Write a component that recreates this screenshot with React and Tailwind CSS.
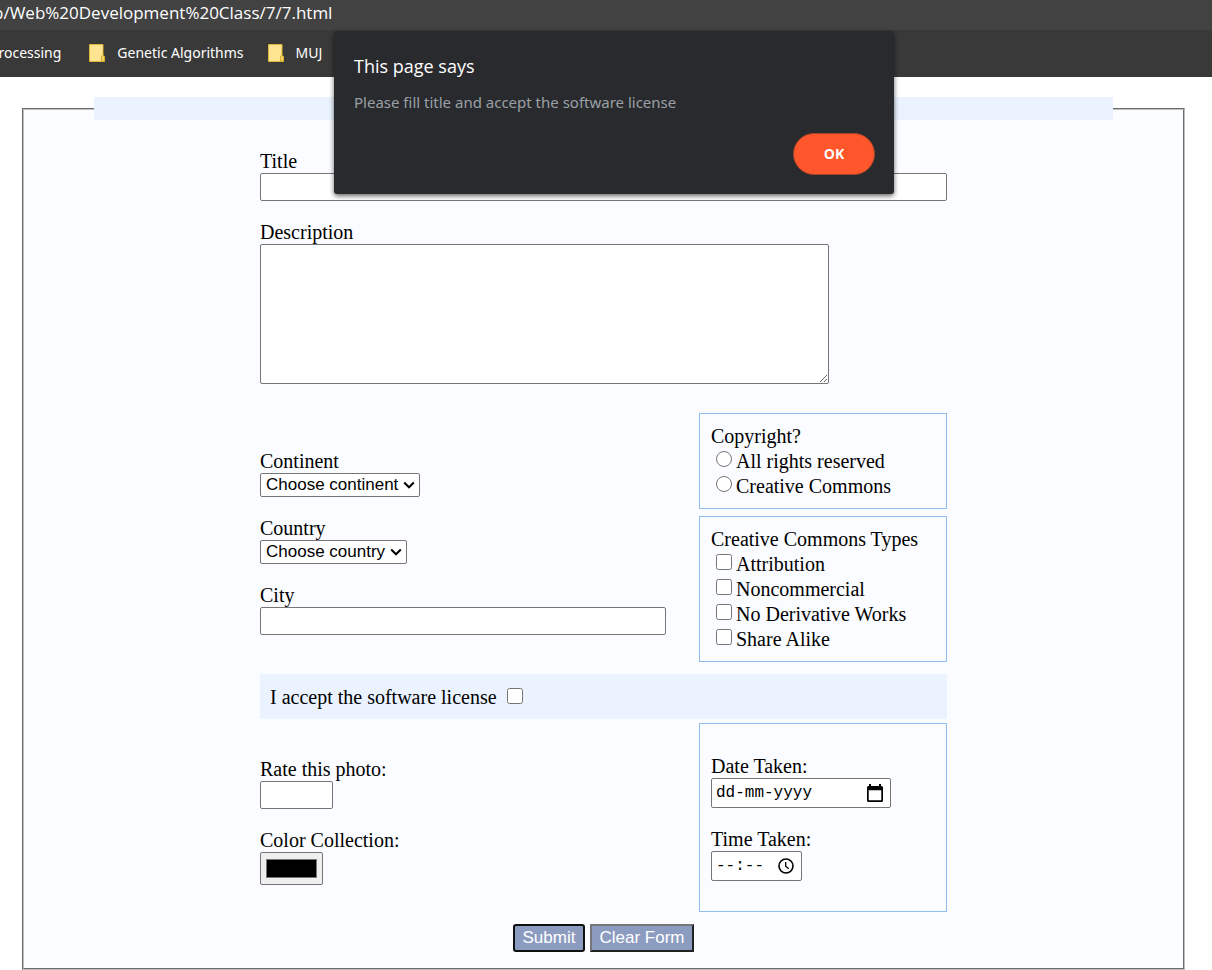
import React from "react";

const field = "block rounded-[2px] border border-[#767676] bg-white";
const panel = "border border-[#90bdeb] px-[11px] pt-[11px] pb-[10px]";
const sans = "font-['Liberation_Sans',Arial,sans-serif]";

function Folder() {
  return (
    <svg width="16" height="18" viewBox="0 0 16 18" aria-hidden="true">
      <path d="M0.5 0.5H14V12L15.5 12.5V17.5H0.5Z" fill="#ffe591" stroke="#dfb637" />
      <path d="M12.5 17V12.5L14 11.5L15.5 12.5V17Z" fill="#f6d469" stroke="#d9ae2b" />
    </svg>
  );
}

function Bookmark({ children }) {
  return (
    <a href="#" className="flex items-center gap-3 whitespace-nowrap">
      <Folder />
      {children}
    </a>
  );
}

function BrowserBar() {
  return (
    <header className="overflow-hidden text-white">
      <div className="flex h-[30px] items-start bg-[#424242] font-['Open_Sans','Noto_Sans',sans-serif]">
        <span className="-ml-[7px] text-[17px] leading-[26px] whitespace-nowrap">p/Web%20Development%20Class/7/7.html</span>
      </div>
      <nav className="flex h-[47px] items-center gap-6 bg-[#393939] pb-[2px] font-['Noto_Sans','Open_Sans',sans-serif] text-[14px] leading-5">
        <a href="#" className="-ml-[10px] mr-1">Processing</a>
        <Bookmark>Genetic Algorithms</Bookmark>
        <Bookmark>MUJ</Bookmark>
      </nav>
    </header>
  );
}

function AlertDialog() {
  return (
    <div
      role="alertdialog"
      aria-labelledby="alert-title"
      aria-describedby="alert-text"
      className="absolute top-[31px] left-[334px] flex w-[560px] flex-col rounded-[3px] bg-[#292a2d] pt-[22px] pr-[19px] pb-[19px] pl-5 font-['Open_Sans','Noto_Sans',sans-serif] shadow-[0_2px_5px_rgba(0,0,0,0.6)]"
    >
      <h2 id="alert-title" className="text-[18px] leading-[26px] text-white">This page says</h2>
      <p id="alert-text" className="mt-3 font-['Noto_Sans','Open_Sans',sans-serif] text-[15px] leading-[22px] text-[#9aa0a6]">
        Please fill title and accept the software license
      </p>
      <button
        type="button"
        className="mt-5 h-[42px] w-[82px] self-end rounded-full border border-[#a5432a] bg-[#ff562b] pb-[2px] text-[14px] font-bold text-white"
      >
        OK
      </button>
    </div>
  );
}

function Select({ id, width, children }) {
  return (
    <div className={`relative ${width}`}>
      <select id={id} className={`${field} ${sans} h-6 w-full appearance-none px-[5px] text-[17px] leading-5`}>
        <option>{children}</option>
      </select>
      <svg
        className="pointer-events-none absolute top-[8px] right-[5px]"
        width="12"
        height="8"
        viewBox="0 0 12 8"
        fill="none"
        stroke="#000"
        strokeWidth="2"
        aria-hidden="true"
      >
        <path d="M1.2 1.5L6 6.300L10.8 1.5" />
      </svg>
    </div>
  );
}

function Option({ type, name, children }) {
  return (
    <label className="flex h-[25px] items-center gap-1 pt-[2px] pl-[5px]">
      <input type={type} name={name} className="mb-[5px] size-4" />
      {children}
    </label>
  );
}

function CalendarIcon() {
  return (
    <svg width="16" height="18" viewBox="0 0 16 18" aria-hidden="true">
      <path d="M2 0h2v2h8V0h2v2h.5a1.5 1.5 0 0 1 1.5 1.5v13a1.5 1.5 0 0 1-1.5 1.5h-13A1.5 1.5 0 0 1 0 16.500V3.500A1.500 1.500 0 0 1 1.500 2H2zM1.700 6.300v10h12.600v-10z" fill="#000" fillRule="evenodd" />
    </svg>
  );
}

function ClockIcon() {
  return (
    <svg width="16" height="16" viewBox="0 0 16 16" fill="none" stroke="#000" aria-hidden="true">
      <circle cx="8" cy="8" r="7" strokeWidth="1.6" />
      <path d="M7.7 4v4.300l3 2.500" strokeWidth="1.3" />
    </svg>
  );
}

function PickerField({ id, label, width, placeholder, icon, pick }) {
  return (
    <div>
      <label htmlFor={id} className="block">{label}</label>
      <div className={`${field} ${width} flex h-[30px] items-center pr-[7px] pl-[4px]`}>
        <input
          id={id}
          type="text"
          placeholder={placeholder}
          className="min-w-0 flex-1 font-['Liberation_Mono',monospace] text-[16px] leading-5 outline-none placeholder:text-black"
        />
        <button type="button" aria-label={pick}>{icon}</button>
      </div>
    </div>
  );
}

export default function App() {
  return (
    <div className="relative bg-white font-['Liberation_Serif','Times_New_Roman',serif] text-[20px] leading-[23px] text-black">
      <BrowserBar />
      <main className="pt-5 pr-[27px] pl-[22px]">
        <form onSubmit={(e) => e.preventDefault()}>
          <fieldset className="border-2 border-[#c0c0c0] bg-[#fbfcff] pb-4 [border-style:groove]">
            <legend className="mx-auto h-[23px] w-[88%] bg-[#eaf3ff]" />
            <div className="mx-auto max-w-[687px] pt-[30px]">
              <label htmlFor="title" className="block">Title</label>
              <input id="title" type="text" className={`${field} h-7 w-full`} />

              <label htmlFor="description" className="mt-5 block">Description</label>
              <textarea id="description" className={`${field} h-[140px] w-[569px] max-w-full`} />

              <div className="mt-[29px] flex items-start justify-between">
                <div className="flex w-[406px] flex-col gap-5 pt-[37px]">
                  <div>
                    <label htmlFor="continent" className="block">Continent</label>
                    <Select id="continent" width="w-[160px]">Choose continent</Select>
                  </div>
                  <div>
                    <label htmlFor="country" className="block">Country</label>
                    <Select id="country" width="w-[147px]">Choose country</Select>
                  </div>
                  <div>
                    <label htmlFor="city" className="block">City</label>
                    <input id="city" type="text" className={`${field} h-7 w-full`} />
                  </div>
                </div>
                <div className="flex w-[248px] flex-col gap-[7px]">
                  <div role="radiogroup" aria-labelledby="copyright" className={panel}>
                    <p id="copyright">Copyright?</p>
                    <Option type="radio" name="copyright">All rights reserved</Option>
                    <Option type="radio" name="copyright">Creative Commons</Option>
                  </div>
                  <div role="group" aria-labelledby="cc-types" className={panel}>
                    <p id="cc-types">Creative Commons Types</p>
                    <Option type="checkbox" name="attribution">Attribution</Option>
                    <Option type="checkbox" name="noncommercial">Noncommercial</Option>
                    <Option type="checkbox" name="noderivatives">No Derivative Works</Option>
                    <Option type="checkbox" name="sharealike">Share Alike</Option>
                  </div>
                </div>
              </div>

              <label className="mt-3 flex h-[45px] items-center gap-[10px] bg-[#eaf3ff] px-[10px] pt-[2px]">
                I accept the software license
                <input type="checkbox" name="license" className="mb-[3px] size-4" />
              </label>

              <div className="mt-1 flex items-start justify-between">
                <div className="flex flex-col gap-5 pt-[35px]">
                  <div>
                    <label htmlFor="rating" className="block">Rate this photo:</label>
                    <input id="rating" type="number" className={`${field} h-7 w-[73px]`} />
                  </div>
                  <div>
                    <label htmlFor="color" className="block">Color Collection:</label>
                    <input
                      id="color"
                      type="color"
                      defaultValue="#000000"
                      className="block h-[33px] w-[63px] rounded-[2px] border border-[#767676] bg-[#efefef] px-[3px] py-[2px]"
                    />
                  </div>
                </div>
                <div className="flex w-[248px] flex-col gap-5 border border-[#90bdeb] px-[11px] pt-[31px] pb-[30px]">
                  <PickerField id="date" label="Date Taken:" width="w-[180px]" placeholder="dd-mm-yyyy" icon={<CalendarIcon />} pick="Choose date" />
                  <PickerField id="time" label="Time Taken:" width="w-[91px]" placeholder="--:--" icon={<ClockIcon />} pick="Choose time" />
                </div>
              </div>

              <div className={`${sans} mt-3 flex justify-center gap-[5px] text-[17px] leading-5 text-white`}>
                <button type="submit" className="h-7 w-[72px] rounded-[3px] border-2 border-[#101010] bg-[#8c9cc0]">Submit</button>
                <button type="reset" className="h-7 w-[104px] border-2 border-[#767676] border-r-[#212121] border-b-[#212121] bg-[#8c9cc0]">
                  Clear Form
                </button>
              </div>
            </div>
          </fieldset>
        </form>
      </main>
      <AlertDialog />
    </div>
  );
}
